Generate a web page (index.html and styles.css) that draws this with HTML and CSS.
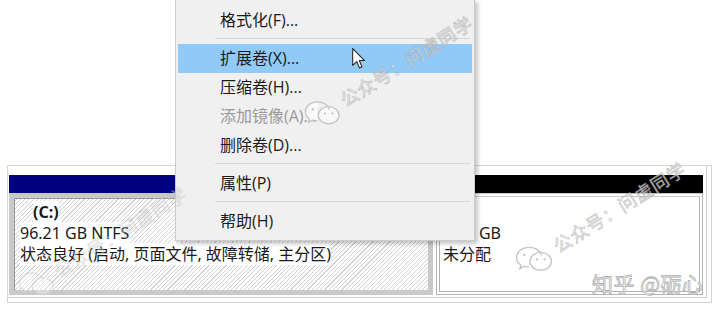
FILE: index.html
```html
<!DOCTYPE html>
<html lang="zh-CN">
<head>
<meta charset="utf-8">
<title>磁盘管理</title>
<link rel="stylesheet" href="styles.css">
</head>
<body>
<div class="page">
  <div class="disk">
    <div class="part part-c">
      <div class="bar bar-primary"></div>
      <div class="pbody hatched">
        <div class="line name"><span>(C:)</span></div>
        <div class="line"><span>96.21 GB NTFS</span></div>
        <div class="line"><span>状态良好 (启动, 页面文件, 故障转储, 主分区)</span></div>
      </div>
    </div>
    <div class="part part-u">
      <div class="bar bar-unalloc"></div>
      <div class="pbody plain">
        <div class="line spacer"></div>
        <div class="line"><span>3.00 GB</span></div>
        <div class="line"><span>未分配</span></div>
      </div>
    </div>
  </div>
</div>

<div class="menu">
  <div class="item">格式化(F)...</div>
  <div class="sep"></div>
  <div class="item active">扩展卷(X)...</div>
  <div class="item">压缩卷(H)...</div>
  <div class="item disabled">添加镜像(A)...</div>
  <div class="item">删除卷(D)...</div>
  <div class="sep"></div>
  <div class="item">属性(P)</div>
  <div class="sep"></div>
  <div class="item">帮助(H)</div>
</div>

<div class="wm wm1">
  <svg class="wx" viewBox="0 0 40 28" width="38" height="26"><path d="M15 2C7.5 2 2 6.8 2 12.5c0 3.2 1.7 6 4.4 7.9L5.4 24l4.3-2.3c1.6.5 3.4.8 5.3.8" fill="rgba(255,255,255,0.6)" stroke="#c4c4c4" stroke-width="1.4"/><ellipse cx="27" cy="16.5" rx="11.2" ry="9.3" fill="rgba(255,255,255,0.6)" stroke="#c4c4c4" stroke-width="1.4"/><path d="M15 2c6.4 0 11.6 3.6 12.8 8.3" fill="none" stroke="#c4c4c4" stroke-width="1.4"/><circle cx="10" cy="10" r="1.3" fill="#c4c4c4"/><circle cx="23" cy="14.5" r="1.2" fill="#c4c4c4"/><circle cx="31" cy="14.5" r="1.2" fill="#c4c4c4"/></svg>
  <span class="wt">公众号：问虚同学</span>
</div>
<div class="wm wm2">
  <svg class="wx" viewBox="0 0 40 28" width="38" height="26"><path d="M15 2C7.5 2 2 6.8 2 12.5c0 3.2 1.7 6 4.4 7.9L5.4 24l4.3-2.3c1.6.5 3.4.8 5.3.8" fill="rgba(255,255,255,0.6)" stroke="#d0d0d0" stroke-width="1.4"/><ellipse cx="27" cy="16.5" rx="11.2" ry="9.3" fill="rgba(255,255,255,0.6)" stroke="#d0d0d0" stroke-width="1.4"/><path d="M15 2c6.4 0 11.6 3.6 12.8 8.3" fill="none" stroke="#d0d0d0" stroke-width="1.4"/></svg>
  <span class="wt">公众号：问虚同学</span>
</div>
<div class="wm wm3">
  <svg class="wx" viewBox="0 0 40 28" width="40" height="27"><path d="M15 2C7.5 2 2 6.8 2 12.5c0 3.2 1.7 6 4.4 7.9L5.4 24l4.3-2.3c1.6.5 3.4.8 5.3.8" fill="rgba(255,255,255,0.6)" stroke="#c4c4c4" stroke-width="1.4"/><ellipse cx="27" cy="16.5" rx="11.2" ry="9.3" fill="rgba(255,255,255,0.6)" stroke="#c4c4c4" stroke-width="1.4"/><path d="M15 2c6.4 0 11.6 3.6 12.8 8.3" fill="none" stroke="#c4c4c4" stroke-width="1.4"/><circle cx="10" cy="10" r="1.3" fill="#c4c4c4"/><circle cx="23" cy="14.5" r="1.2" fill="#c4c4c4"/><circle cx="31" cy="14.5" r="1.2" fill="#c4c4c4"/></svg>
  <span class="wt">公众号：问虚同学</span>
</div>
<div class="zhihu">知乎 @砺心</div>

<svg class="cursor" viewBox="0 0 13 21" width="14" height="22"><path d="M0.5 0.5 L0.5 16.5 L4.3 12.9 L6.9 19 L9.3 18 L6.8 12 L11.8 12 Z" fill="#fff" stroke="#222" stroke-width="1" stroke-linejoin="round"/></svg>
</body>
</html>
```
FILE: styles.css
```css
html, body {
  margin: 0;
  padding: 0;
  background: #fff;
}
body {
  width: 720px;
  height: 314px;
  overflow: hidden;
  position: relative;
  font-family: "Noto Sans", "Noto Sans CJK SC", sans-serif;
  color: #1a1a1a;
}
.page {
  padding: 165px 0 0 7px;
}
.disk {
  box-sizing: border-box;
  width: 705px;
  height: 138px;
  border: 1px solid #d6d6d6;
  padding: 9px 0 0 1px;
  display: flex;
  gap: 3px;
  box-shadow: inset -4px -4px 0 #fff, inset -5px -5px 0 #cfcfcf;
}
.part {
  display: flex;
  flex-direction: column;
}
.part-c { width: 424px; }
.part-u { width: 267px; }
.bar { height: 18px; }
.bar-primary { background: #000080; }
.bar-unalloc { background: #000; }
.pbody {
  box-sizing: border-box;
  height: 102px;
  font-size: 16px;
  line-height: 21px;
}
.hatched {
  border: 5px solid #c9c9c9;
  box-shadow: inset 1px 1px 0 #9a9a9a;
  padding: 4px 0 0 6px;
  background: repeating-linear-gradient(135deg, #fff 0 2.2px, #d2d2d2 2.2px 3px);
}
.plain {
  border: 4px double #b4b4b4;
  border-top-color: #c8c8c8;
  padding: 5px 0 0 3px;
  background: #fff;
}
.line span {
  background: #fff;
  white-space: nowrap;
}
.line.name {
  padding-left: 13px;
  font-weight: 700;
}
.line.spacer { height: 21px; }

.menu {
  position: absolute;
  left: 175px;
  top: -1px;
  width: 300px;
  box-sizing: border-box;
  border: 1px solid #cbcbcb;
  background: #f0f0f0;
  padding: 6px 2px 4px 2px;
  box-shadow: 3px 3px 4px rgba(0, 0, 0, 0.22);
  font-family: "Open Sans", "Noto Sans CJK SC", sans-serif;
  font-size: 16px;
  z-index: 5;
}
.item {
  height: 29px;
  line-height: 29px;
  padding-left: 42px;
  color: #1b1b1b;
  white-space: nowrap;
}
.item.active { background: #91c9f7; }
.item.disabled { color: #9a9a9a; }
.sep {
  height: 1px;
  margin: 3px 2px 5px 37px;
  background: #d7d7d7;
}

.wm {
  position: absolute;
  z-index: 8;
  display: flex;
  align-items: center;
  gap: 4px;
  transform: rotate(-32deg);
  transform-origin: 0 50%;
  pointer-events: none;
}
.wt {
  font-family: "Noto Sans CJK SC", sans-serif;
  font-weight: 400;
  font-size: 18px;
  letter-spacing: 1px;
  line-height: 24px;
  color: rgba(255, 255, 255, 0.7);
  -webkit-text-stroke: 0.9px rgba(150, 150, 150, 0.5);
  white-space: nowrap;
}
.wx { flex: none; transform: rotate(32deg); }
.wm1 { left: 306px; top: 110px; }
.wm3 { left: 517px; top: 256px; }
.wm2 { left: 20px; top: 281px; opacity: 0.55; }

.zhihu {
  position: absolute;
  z-index: 8;
  left: 592px;
  top: 270px;
  font-family: "Noto Sans CJK SC", sans-serif;
  font-size: 21px;
  letter-spacing: 0.5px;
  line-height: 26px;
  color: rgba(255, 255, 255, 0.85);
  -webkit-text-stroke: 0.8px #b0b0b0;
  white-space: nowrap;
}
.cursor {
  position: absolute;
  z-index: 10;
  left: 352px;
  top: 48px;
}
```
